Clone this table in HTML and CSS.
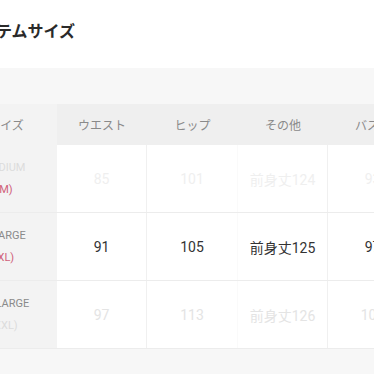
FILE: index.html
```html
<!DOCTYPE html>
<html lang="ja">
<head>
<meta charset="utf-8">
<link rel="stylesheet" href="styles.css">
</head>
<body>
<div class="page">
  <header class="head">
    <h2 class="title">アイテムサイズ</h2>
  </header>
  <section class="area">
    <div class="table">
      <div class="row hdr">
        <div class="cell c1">サイズ</div>
        <div class="cell">ウエスト</div>
        <div class="cell">ヒップ</div>
        <div class="cell">その他</div>
        <div class="cell">バスト</div>
      </div>
      <div class="row">
        <div class="cell c1 two"><span class="faint">MEDIUM</span><span class="pink">(M)</span></div>
        <div class="cell"><span class="ghost">85</span></div>
        <div class="cell"><span class="ghost">101</span></div>
        <div class="cell"><span class="ghost">前身丈124</span></div>
        <div class="cell"><span class="ghost">93</span></div>
      </div>
      <div class="row">
        <div class="cell c1 two"><span>X-LARGE</span><span class="pink">(XL)</span></div>
        <div class="cell">91</div>
        <div class="cell">105</div>
        <div class="cell">前身丈125</div>
        <div class="cell">97</div>
      </div>
      <div class="row">
        <div class="cell c1 two"><span>XX-LARGE</span><span class="faint">(XXL)</span></div>
        <div class="cell"><span class="ghost2">97</span></div>
        <div class="cell"><span class="ghost2">113</span></div>
        <div class="cell"><span class="ghost2">前身丈126</span></div>
        <div class="cell"><span class="ghost2">101</span></div>
      </div>
    </div>
  </section>
</div>
</body>
</html>
```

FILE: styles.css
```css
* { box-sizing: border-box; }
html, body {
  margin: 0;
  padding: 0;
  background: #ffffff;
  overflow: hidden;
}
body {
  font-family: "Roboto", "Noto Sans CJK JP", sans-serif;
  color: #333;
}
.page {
  width: 374px;
  height: 374px;
  overflow: hidden;
}
.head {
  height: 68px;
  display: flex;
  align-items: center;
  padding-bottom: 8px;
}
.title {
  margin: 0 0 0 -35px;
  font-family: "Noto Sans CJK JP", sans-serif;
  font-size: 16px;
  font-weight: 700;
  color: #2a2a2a;
  white-space: nowrap;
}
.area {
  background: #f7f7f7;
  height: 306px;
  padding-top: 36px;
}
.table {
  margin-left: -33px;
  width: 450px;
  display: flex;
  flex-direction: column;
}
.row {
  display: grid;
  grid-template-columns: 90px 90px 91px 90px 90px;
  height: 68px;
  background: #fff;
  border-bottom: 1px solid #ececec;
}
.row.hdr {
  height: 41px;
  background: #efefef;
  border-bottom: none;
}
.cell {
  display: flex;
  align-items: center;
  justify-content: center;
  font-size: 14px;
  border-right: 1px solid #f0f0f0;
  white-space: nowrap;
}
.row.hdr .cell {
  font-family: "Noto Sans CJK JP", sans-serif;
  font-size: 12px;
  color: #8a8a8a;
  border-right: none;
}
.row.hdr .c1 {
  padding-right: 12px;
}
.cell:nth-child(3) { border-right-color: #fafafa; }
.c1 {
  background: #f3f3f3;
  color: #8a8a8a;
  font-size: 11px;
}
.row:not(.hdr) .c1 { border-right: none; }
.two {
  flex-direction: column;
  gap: 8px;
  align-items: center;
  padding-right: 16px;
  line-height: 14px;
}
.pink { color: #d0607a; }
.faint { color: #dcdcdc; }
.ghost { color: #efefef; }
.ghost2 { color: #e4e4e4; }
```
